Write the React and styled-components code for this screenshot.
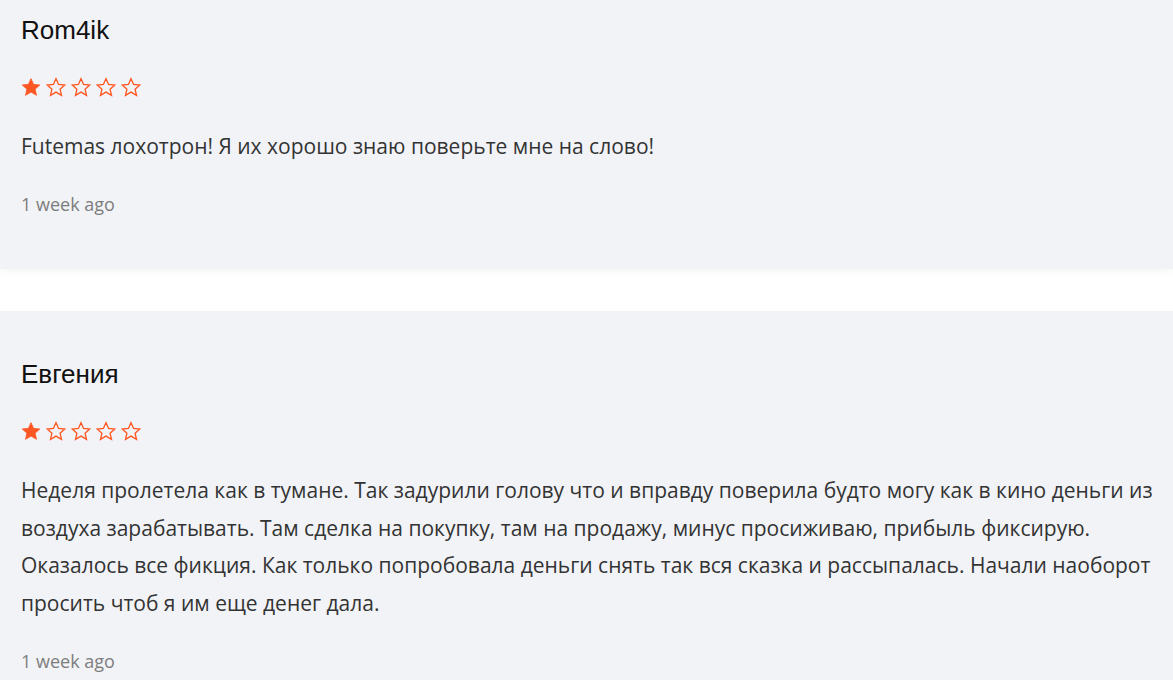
import styled, { createGlobalStyle } from 'styled-components';

const GlobalStyle = createGlobalStyle`
  body {
    margin: 0;
    background: #ffffff;
    font-family: "Open Sans", sans-serif;
    overflow: hidden;
  }
`;

const ReviewList = styled.div`
  display: flex;
  flex-direction: column;
  gap: 42px;
  margin-top: -33px;
`;

const Card = styled.div`
  background: #f2f3f7;
  padding: 48px 12px 53px 21px;
  box-shadow: 0 3px 8px rgba(0, 0, 0, 0.04);
  display: flex;
  flex-direction: column;
`;

const Author = styled.div`
  font-family: "Liberation Sans", Arial, sans-serif;
  font-size: 26px;
  line-height: 30px;
  color: #111;
`;

const Stars = styled.div`
  display: flex;
  gap: 5px;
  margin-top: 32px;
  height: 20px;
`;

const Text = styled.p`
  margin: 31px 0 0;
  font-size: 21px;
  line-height: 37.8px;
  color: #333;
`;

const Date = styled.div`
  margin-top: 26px;
  font-size: 18px;
  line-height: 24px;
  color: #7d7d7d;
`;

const Star = ({ filled }) => (
  <svg width="20" height="20" viewBox="0 0 24 23">
    <path
      d="M12 1.5l3.1 6.9 7.4.7-5.6 5 1.7 7.4L12 17.6l-6.6 3.9 1.7-7.4-5.6-5 7.4-.7z"
      fill={filled ? '#ff5722' : 'none'}
      stroke="#ff5722"
      strokeWidth={filled ? 1 : 1.6}
      strokeLinejoin="miter"
    />
  </svg>
);

const reviews = [
  {
    author: 'Rom4ik',
    rating: 1,
    text: 'Futemas лохотрон! Я их хорошо знаю поверьте мне на слово!',
    date: '1 week ago',
  },
  {
    author: 'Евгения',
    rating: 1,
    text: 'Неделя пролетела как в тумане. Так задурили голову что и вправду поверила будто могу как в кино деньги из воздуха зарабатывать. Там сделка на покупку, там на продажу, минус просиживаю, прибыль фиксирую. Оказалось все фикция. Как только попробовала деньги снять так вся сказка и рассыпалась. Начали наоборот просить чтоб я им еще денег дала.',
    date: '1 week ago',
  },
];

export default function App() {
  return (
    <>
      <GlobalStyle />
      <ReviewList>
        {reviews.map((r, i) => (
          <Card key={i}>
            <Author>{r.author}</Author>
            <Stars>
              {[1, 2, 3, 4, 5].map(n => (
                <Star key={n} filled={n <= r.rating} />
              ))}
            </Stars>
            <Text>{r.text}</Text>
            <Date>{r.date}</Date>
          </Card>
        ))}
      </ReviewList>
    </>
  );
}
